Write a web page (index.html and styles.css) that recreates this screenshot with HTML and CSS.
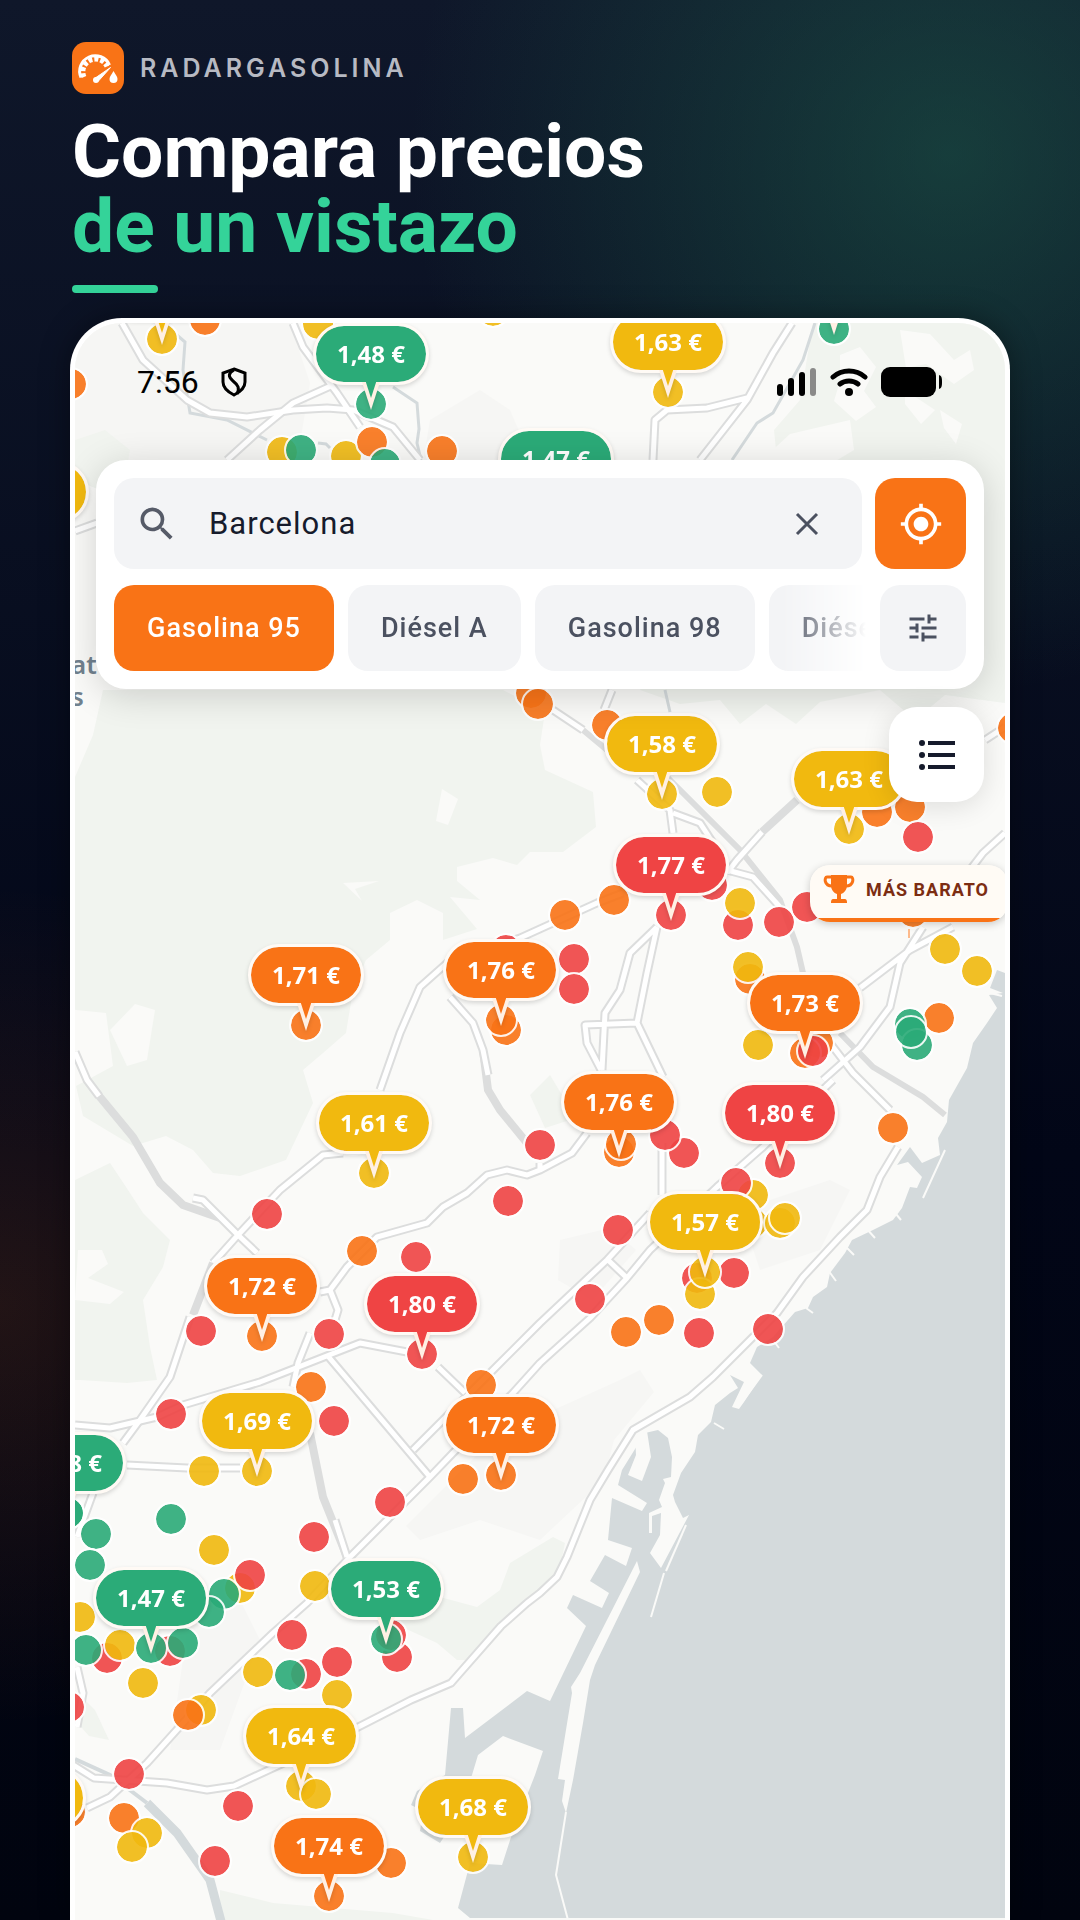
FILE: index.html
```html
<!DOCTYPE html>
<html lang="es">
<head>
    <meta charset="UTF-8">
    <meta name="viewport" content="width=device-width, initial-scale=1.0">
    <title>RadarGasolina</title>
    <link rel="stylesheet" href="styles.css">
</head>
<body>
    <header class="hero">
        <div class="brand">
            <svg class="brand-logo" viewBox="0 0 52 52" aria-hidden="true">
                <rect width="52" height="52" rx="14" fill="#f97316"/>
                <path d="M9 35.500A15.500 15.500 0 0 1 37.500 23" fill="none" stroke="#fff" stroke-width="3"/>
                <path d="M12 35A12.500 12.500 0 0 1 35 24.500" fill="none" stroke="#fff" stroke-width="5" stroke-dasharray="4 2"/>
                <path d="M22.500 36.500L38.500 25.500 26 39.500z" fill="#fff" stroke="#fff" stroke-linejoin="round"/>
                <circle cx="24" cy="38" r="3" fill="#fff"/>
                <path d="M41.500 29c2 3.500 4 5.500 4 8a4 4 0 0 1-8 0c0-2.500 2-4.500 4-8z" fill="#fff"/>
            </svg>
            <span class="brand-name">RADARGASOLINA</span>
        </div>
        <h1>Compara precios <span class="accent">de un vistazo</span></h1>
        <div class="underline"></div>
    </header>

    <main class="screen">
        <div class="map" id="map">
            <svg class="map-base" viewBox="75 323 930 1597" aria-hidden="true">
                <rect x="75" y="323" width="930" height="1597" fill="#fafaf8"/>

                <!-- built-up areas -->
                <g fill="#f6f6f4">
                    <path d="M75 323h215l20 60-10 60-60 40-80 10-85-20z"/>
                    <path d="M420 480l10-60 50-30 30 20 30 70z"/>
                    <path d="M620 1380l20-10 14 22-40 48-10 40-64 60-60-20-60 20-14-14 90-90z"/>
                    <path d="M560 1240l50-12 26 22-44 50-34-20z"/>
                    <path d="M740 1210l90-30 20 10-30 60-60 20z"/>
                    <path d="M190 1610l40-30 30 60-40 110-50 0z"/>
                </g>

                <!-- parks and hills -->
                <g fill="#f1f4ef">
                    <path d="M75 777l18-42 10-45h400l42 22-5 33 5 25 48 22 3 35-33 25h-33l-13 13-24-7-36 9v14l23 19-30-3 27 32-34 11v-27l-26-13-27 13v27l-24 20-13 30-7 43-23 20-20 17 10 33-27 57-46 16-27-3-20-23-27-14-33 10-50-30-7-30 37-20-7-53-30-3-28-10z"/>
                    <path d="M75 1180l35-17 16 24 17 26 27 27-7 27-20 33 7 47 7 33-30 3-47-3h-5z"/>
                    <path d="M813 323h192v380l-60-8-30 25-35-30-60 12-24 22-30-20-26 20-20-24-40 4-40-14 40-60 50-60 20-60 30-20-6-60 26-30z"/>
                    <path d="M440 1597l37 10 23-17 10-27 43-26 12 6-5 25-10 17-23 18-50 57h-20l-20-17-44-20z"/>
                    <path d="M220 1890l53 13 120 10 40 7H220z"/>
                    <path d="M75 440l30-10 25 20-5 30-25 10-25-10z"/>
                    <path d="M530 1095l20-20 12 20 8 25-25 8z"/>
                    <path d="M75 1690l20 20 14 30-20-4-14-16z"/>
                </g>
                <g fill="#fafaf8">
                    <path d="M840 355l20-8 16 20-12 24 12 16-20 14-22-20 6-20z"/>
                    <path d="M850 420l4 30-50 30-40-22 26-24z"/>
                    <path d="M900 330l30 4 24 26 16-10 4 20-20 14-28-20-20 4z"/>
                    <path d="M905 390l30 20-14 14-16-20zM940 410l22 14-6 20-12-16z"/>
                    <path d="M442 789l16 10-10 26-12-4z"/>
                    <path d="M343 883l36-2-24 8 7 12z"/>
                    <path d="M110 1030l25-26 20 6-8 50-20 6z"/>
                    <path d="M78 1250l24 0 6 14-20 14 36 14-14 12-35-4z"/>
                </g>

                <!-- sea and harbour -->
                <path fill="#d4dadc" d="M1005 973l-8-3-7 18 13 5-14 2 8 13-10 15-14 20-6 25-18 32-2 22-9 16 2 17-18 8-12-16-13 18 11-3 14 15-5 11-7-1-8 21-9 12-20 10-21 10-7 13-15 20-3 14-14 10-5 11-13 4-22 25-16 10-7 16 12 12-18 27-5 7-7-2 12-25-14-7 8 13-8 5-15 12-4 17-13 13-3 17-14 21-8 22 2 7 8 16 6-3-28 53-11-15 10-18 1-22-9 3v17h-3v-20l13-6-3-7 6-17-2-4 8-2 1-20-4-19-10-8-13 3-23 37-4 15 29 18-5 8-30-13-4 42 24 8-6 18-21-11-15 26 19 12-7 15-29-13-6 13 19 18-36 75-23-10-62 47-2-30h-12l-6 67-28 16-6 14 12 6-3 20 20 12 10-15 22-53 6-20 25-19 40 15-8 24-22 56-11 34-32-2-12 45 12 10h545z"/>

                <!-- piers and breakwaters -->
                <g fill="#fafaf8">
                    <path d="M637 1561l3 11-45 93-5 15-7 43-10 57-7 33-4-12 3-21-7-1 14-86-1-6 9-14z"/>
                    <path d="M635 1435l12-4 4 26-9 24-14-6 8-20z"/>
                </g>
                <g fill="none" stroke="#fafaf8" stroke-width="2">
                    <path d="M566 1812l-10 63 12 45"/>
                    <path d="M664 1573l-13 44M945 1150l-22 48M762 1375l-22 30"/>
                    <path d="M866 1228l9 10M845 1246l9 9M828 1270l8 11M896 1214l5 6"/>
                    <path d="M714 1423l10 6M806 1308l7 5M773 1340l6 8M986 992l16 4"/>
                    <path d="M686 1525l-20 46"/>
                </g>

                <!-- streams -->
                <g fill="none" stroke="#d4dadc" stroke-width="3">
                    <path d="M163 323l22 19-2 28 7 43 37 7 40 20M393 387l24 16 2 26-2 14 4 17M318 443l8 1 4 4"/>
                    <path d="M815 323l-12 37-30 53-16 10-25 37M665 690l5 22"/>
                    <path stroke-width="4" d="M75 1759l35 16 37 28"/>
                    <path stroke-width="9" d="M147 1803l30 30 33 47 12 45"/>
                </g>

                <!-- tunnels and rail -->
                <g fill="none" stroke="#dcdddd" stroke-width="8">
                    <path d="M87 1080l13 17 33 40 27 46 23 22 37 13"/>
                    <path d="M483 1050l5 40 12 20 27 33"/>
                    <path d="M213 1263l-20 52M797 800l-35 32M310 1433l13 64 24 60"/>
                    <path stroke-width="6" d="M663 773l77 77 40 50 17 47 6 26M840 1033l33 34 50 30 22 18M583 730l24 20"/>
                </g>

                <!-- each road is drawn twice: grey casing, then the white surface -->
                <defs>
                    <g id="roads">
                        <path d="M122 323l21 37 44 40 23 13 37 4 46-7 34-2 26 2 40 17 27 33"/>
                        <path d="M227 460l33-30 33-27 40-18M293 323l10 24 34 46 23 34"/>
                        <path d="M792 323l-19 30-26 47-47 60M747 398l-40 10-40 2-12 10-2 40M75 531l22-8"/>
                        <path d="M553 710l30 20M612 690l-8 20M637 780l33 30 3 23M673 813l27 10 13 20M762 832l-25 28-10 13M727 870l26 7 27 30"/>
                        <path d="M380 1090l20-57 20-46 27-24 73-25 77-35 26-10"/>
                        <path d="M657 927l-27 26-10 37-15 23-3 57M657 927l-10 46-10 50 26 54M637 1023l-52 2 2 18 14 27"/>
                        <path d="M1005 833l-22 20-13 17M923 927l-23 36-10 44-30 40-37 33M953 927l-43 23-50 38M1005 727l-20 13"/>
                        <path d="M830 1043l23 30 37 37M898 1147l-18 30-13 33-27 27-37 40-26 36-24 24-40 40-23 20-57 33-25 40-18 30-23 57-10 20-17 16-13 10-26 23-50 57-40 17-84 43-93 43-27 4-40-7-73-5-40-25"/>
                        <path d="M833 1080l-70 67-46 40-67 63-23 28-37 40-50 45-27 30-60 60-23 24-80 80-43 46-34 30-63 60-63 70-37 34-23 11"/>
                        <path d="M650 1213l-43 47-67 63-47 47-80 80M608 1260l19 18M662 1143v52M450 997l23 26 10 27 5 25"/>
                        <path d="M587 1133l-15 20-32 17-13 5-20-5-20 5-20 18-24 14-16 16-50 14-30 30-17 23 8 20-3 10M330 1290l-10 2M540 1163v8"/>
                        <path d="M343 1153l-20 2-43 35-42 45-25 28M190 1317l-20 60-30 43-17 23M193 1198l10 2 35 35 19 18"/>
                        <path d="M75 1052l12 28 12 16M75 1425l35 3 47-11 26-12 77-23 100-39 47 9"/>
                        <path d="M310 1333l-12 30-5 24M327 1355l103 122M438 1367l27 26M127 1465l60 3h53M335 1520l12 37"/>
                        <path d="M93 1493l-16 44M77 1667l6 26-6 34"/>
                    </g>
                </defs>
                <g fill="none" stroke-linejoin="round">
                    <use href="#roads" stroke="#dcdddd" stroke-width="9"/>
                    <use href="#roads" stroke="#fff" stroke-width="5"/>
                </g>
            </svg>
            <span class="place">at<br>s</span>
        </div>

        <div class="status-bar">
            <span class="clock">7:56</span>
            <svg width="26" height="30" viewBox="0 0 26 30" fill="none" stroke="#000" stroke-width="3" aria-hidden="true">
                <path d="M13 2l11 4v9c0 6-5 10-11 13C7 25 2 21 2 15V6z"/>
                <path d="M13 3c-6 3-6 7-1 11s7 7 4 13"/>
            </svg>
            <div class="status-icons">
                <svg width="40" height="28" viewBox="0 0 40 28" aria-hidden="true">
                    <rect x="0" y="16" width="6" height="12" rx="3"/>
                    <rect x="11" y="10" width="6" height="18" rx="3"/>
                    <rect x="22" y="4" width="6" height="24" rx="3"/>
                    <rect x="33" y="0" width="6" height="28" rx="3" fill="#8a8a89"/>
                </svg>
                <svg width="38" height="28" viewBox="0 0 38 28" fill="none" stroke="#000" stroke-width="5" stroke-linecap="round" aria-hidden="true">
                    <path d="M3 9c9-8 23-8 32 0M10 16c5-4 13-4 18 0"/>
                    <circle cx="19" cy="24" r="4" fill="#000" stroke="none"/>
                </svg>
                <svg width="62" height="30" viewBox="0 0 62 30" aria-hidden="true">
                    <rect width="55" height="30" rx="9"/>
                    <path d="M58 8c3 1 3 4 3 7s0 6-3 7z"/>
                </svg>
            </div>
        </div>

        <section class="search-card">
            <form class="search-row">
                <div class="search-box">
                    <svg width="44" height="44" viewBox="0 0 24 24" fill="#565b68" aria-hidden="true">
                        <path d="M15.500 14h-.79l-.28-.27A6.470 6.470 0 0 0 16 9.500 6.500 6.500 0 1 0 9.500 16c1.610 0 3.090-.59 4.230-1.570l.27.28v.79l5 4.990L20.490 19zm-6 0C7.010 14 5 11.990 5 9.500S7.010 5 9.500 5 14 7.010 14 9.500 11.990 14 9.500 14"/>
                    </svg>
                    <input class="search-input" type="text" value="Barcelona" aria-label="Buscar localidad">
                    <button class="clear-button" type="button" aria-label="Borrar">
                        <svg width="24" height="24" viewBox="0 0 24 24" stroke="#4b5160" stroke-width="3" aria-hidden="true">
                            <path d="M2 2l20 20M22 2L2 22"/>
                        </svg>
                    </button>
                </div>
                <button class="locate-button" type="button" aria-label="Mi ubicación">
                    <svg width="44" height="44" viewBox="0 0 24 24" fill="#fff" aria-hidden="true">
                        <path d="M12 8c-2.210 0-4 1.790-4 4s1.790 4 4 4 4-1.790 4-4-1.790-4-4-4m8.940 3A8.994 8.994 0 0 0 13 3.060V1h-2v2.060A8.994 8.994 0 0 0 3.060 11H1v2h2.060A8.994 8.994 0 0 0 11 20.940V23h2v-2.060A8.994 8.994 0 0 0 20.940 13H23v-2zM12 19c-3.870 0-7-3.130-7-7s3.130-7 7-7 7 3.130 7 7-3.130 7-7 7"/>
                    </svg>
                </button>
            </form>
            <div class="filter-row">
                <div class="fuels">
                    <button class="chip active" type="button">Gasolina 95</button>
                    <button class="chip" type="button">Diésel A</button>
                    <button class="chip" type="button">Gasolina 98</button>
                    <button class="chip" type="button">Diésel A+</button>
                </div>
                <button class="filter-button" type="button" aria-label="Filtros">
                    <svg width="36" height="36" viewBox="0 0 24 24" fill="#4b5160" aria-hidden="true">
                        <path d="M3 17v2h6v-2zM3 5v2h10V5zm10 16v-2h8v-2h-8v-2h-2v6zM7 9v2H3v2h4v2h2V9zm14 4v-2H11v2zm-6-4h2V7h4V5h-4V3h-2z"/>
                    </svg>
                </button>
            </div>
        </section>

        <button class="list-button" type="button" aria-label="Ver lista">
            <svg width="36" height="30" viewBox="0 0 36 30" fill="#161b2c" aria-hidden="true">
                <circle cx="3" cy="3" r="3"/><path d="M9 1h27v4H9z"/>
                <circle cx="3" cy="15" r="3"/><path d="M9 13h27v4H9z"/>
                <circle cx="3" cy="27" r="3"/><path d="M9 25h27v4H9z"/>
            </svg>
        </button>
    </main>

    <script src="map.js"></script>
</body>
</html>
```

FILE: styles.css
```css
* {
    margin: 0;
    padding: 0;
    box-sizing: border-box;
}

body {
    height: 100vh;
    display: flex;
    flex-direction: column;
    overflow: hidden;
    padding: 42px 70px 0;
    font-family: Roboto, sans-serif;
    background:
        radial-gradient(circle at 88% 8%, rgba(34, 110, 84, 0.45), transparent 540px),
        radial-gradient(circle at 0 68%, rgba(249, 115, 22, 0.13), transparent 420px),
        linear-gradient(180deg, #0f172a 0%, #020617 60%, #01040f 100%);
}

button {
    border: none;
    font-family: inherit;
    cursor: pointer;
    display: flex;
    align-items: center;
    justify-content: center;
}

/* Header */

.hero {
    padding: 0 2px;
    margin-bottom: 25px;
}

.brand {
    display: flex;
    align-items: center;
    gap: 16px;
    margin-bottom: 20px;
}

.brand-logo {
    width: 52px;
    height: 52px;
}

.brand-name {
    font-family: Inter, sans-serif;
    font-size: 25px;
    font-weight: 600;
    letter-spacing: 4px;
    color: #b7bac3;
}

h1 {
    color: #fff;
    font-size: 75px;
    line-height: 75px;
    font-weight: 700;
}

.accent {
    display: block;
    color: #34d399;
}

.underline {
    width: 86px;
    height: 8px;
    margin-top: 21px;
    border-radius: 4px;
    background: #34d399;
}

/* Phone screen */

.screen {
    position: relative;
    flex: 1;
    min-height: 0;
    display: flex;
    flex-direction: column;
    overflow: hidden;
    border: 5px solid #fff;
    border-bottom: none;
    border-radius: 52px 52px 0 0;
    background: #fafaf8;
    box-shadow: 0 0 30px rgba(0, 0, 0, 0.4);
}

.status-bar,
.search-card,
.list-button {
    position: relative;
    z-index: 2;
}

.status-bar {
    display: flex;
    align-items: center;
    gap: 22px;
    height: 137px;
    padding: 0 62px 20px;
}

.clock {
    font-size: 32px;
}

.status-icons {
    display: flex;
    align-items: center;
    gap: 13px;
    margin-left: auto;
}

/* Search */

.search-card {
    display: flex;
    flex-direction: column;
    gap: 16px;
    margin: 0 21px;
    padding: 18px;
    border-radius: 30px;
    background: #fff;
    box-shadow: 0 6px 36px rgba(0, 0, 0, 0.16);
}

.search-row {
    display: flex;
    gap: 13px;
}

.search-box {
    flex: 1;
    min-width: 0;
    display: flex;
    align-items: center;
    height: 91px;
    padding: 0 41px 0 21px;
    border-radius: 20px;
    background: #f3f4f6;
}

.search-input {
    flex: 1;
    min-width: 0;
    margin-left: 30px;
    border: none;
    outline: none;
    background: none;
    font-family: inherit;
    font-size: 31px;
    letter-spacing: 1px;
    color: #161b2c;
}

.clear-button {
    width: 28px;
    height: 28px;
    background: none;
}

.locate-button {
    width: 91px;
    height: 91px;
    border-radius: 20px;
    background: #f97316;
}

.filter-row {
    display: flex;
    gap: 14px;
}

.fuels {
    flex: 1;
    min-width: 0;
    display: flex;
    gap: 14px;
    overflow: hidden;
    -webkit-mask-image: linear-gradient(to right, #000 calc(100% - 84px), transparent);
    mask-image: linear-gradient(to right, #000 calc(100% - 84px), transparent);
}

.chip {
    flex-shrink: 0;
    height: 86px;
    padding: 0 33px;
    border-radius: 20px;
    background: #f3f4f6;
    color: #4b5160;
    font-size: 27px;
    font-weight: 500;
    letter-spacing: 1px;
}

.chip.active {
    background: #f97316;
    color: #fff;
}

.filter-button {
    width: 86px;
    height: 86px;
    border-radius: 20px;
    background: #f3f4f6;
}

.list-button {
    align-self: flex-end;
    width: 95px;
    height: 95px;
    margin: 18px 21px 0 0;
    border-radius: 28px;
    background: #fff;
    box-shadow: 0 4px 28px rgba(0, 0, 0, 0.12);
}

/* Map */

.map {
    position: absolute;
    top: 0;
    left: 0;
    width: 100%;
    aspect-ratio: 930 / 1597;
}

.map-base {
    display: block;
    width: 100%;
    height: 100%;
}

/* town name that runs in from beyond the left edge */
.place {
    position: absolute;
    top: 20%;
    left: -4px;
    margin-top: 6px;
    font-family: "Noto Sans", sans-serif;
    font-size: 26px;
    line-height: 32px;
    font-weight: 600;
    color: #71818e;
}

.green { --color: #2bab78; }
.yellow { --color: #f1b90f; }
.orange { --color: #f97316; }
.red { --color: #ef4444; }

.dot {
    position: absolute;
    width: 34px;
    height: 34px;
    border: 2px solid #fff;
    border-radius: 50%;
    background: var(--color);
    background-clip: padding-box;
    opacity: 0.9;
    transform: translate(-50%, -50%);
}

.pin {
    position: absolute;
    width: 116px;
    height: 62px;
    border: 3px solid #fffaf5;
    border-radius: 31px;
    background: var(--color);
    background-clip: padding-box;
    color: #fff;
    font-family: "Noto Sans", sans-serif;
    font-size: 24px;
    font-weight: 700;
    line-height: 56px;
    text-align: center;
    transform: translate(-50%, -50%);
    filter: drop-shadow(0 2px 2px rgba(0, 0, 0, 0.15));
}

/* pointer: pale outline below, coloured tip over it */
.pin::before,
.pin::after {
    content: "";
    position: absolute;
    top: 100%;
    left: 50%;
    transform: translateX(-50%);
    clip-path: polygon(0 0, 100% 0, 50% 100%);
}

.pin::before {
    width: 18px;
    height: 28px;
    background: #fff0e4;
}

.pin::after {
    width: 11px;
    height: 17px;
    margin-top: -1px;
    background: var(--color);
}

.best {
    position: absolute;
    z-index: 1;
    display: flex;
    align-items: center;
    gap: 11px;
    width: 198px;
    height: 57px;
    padding: 0 13px 9px;
    border-radius: 20px;
    background: linear-gradient(#fffbf5 53px, #f97316 53px);
    color: #7c2d12;
    font-size: 18px;
    font-weight: 700;
    letter-spacing: 1px;
    white-space: nowrap;
    box-shadow: 0 2px 8px rgba(0, 0, 0, 0.2);
}

.best::after {
    content: "";
    position: absolute;
    top: 64px;
    left: 98px;
    width: 2px;
    height: 9px;
    background: #fdba8c;
}
```

FILE: map.js
```js
const map = document.getElementById('map');

// Area covered by the base map, in map units
const VIEW = { x: 75, y: 323, width: 930, height: 1597 };
// Distance between a price label and the station it points at
const LABEL_OFFSET = 50;

const COLORS = { g: 'green', y: 'yellow', o: 'orange', r: 'red' };

// Stations without a label, in drawing order
const stations = [
    ['o', 205, 320], ['o', 71, 384], ['y', 282, 452], ['g', 301, 450], ['y', 346, 456],
    ['o', 372, 442], ['g', 385, 464], ['o', 442, 451], ['y', 318, 324], ['y', 493, 311],
    ['o', 531, 693], ['o', 538, 704], ['o', 1013, 728], ['o', 607, 725], ['y', 717, 792],
    ['o', 877, 812], ['o', 910, 807], ['r', 918, 837], ['r', 712, 885], ['o', 614, 900],
    ['o', 565, 915], ['r', 574, 959], ['r', 574, 989], ['r', 738, 925], ['y', 740, 903],
    ['r', 779, 922], ['r', 807, 907], ['o', 913, 912], ['y', 945, 949], ['y', 977, 971],
    ['o', 750, 979], ['y', 748, 967], ['y', 758, 1045], ['o', 818, 1043],
    ['o', 939, 1018], ['g', 910, 1024], ['g', 917, 1045], ['g', 911, 1032],
    ['r', 506, 950], ['o', 506, 1030], ['r', 353, 1139], ['r', 267, 1214], ['o', 362, 1251],
    ['r', 416, 1257], ['r', 508, 1201], ['r', 540, 1145], ['r', 201, 1331], ['r', 329, 1334],
    ['o', 311, 1387], ['r', 171, 1414], ['r', 334, 1421], ['o', 481, 1385], ['o', 463, 1479],
    ['y', 204, 1471], ['r', 390, 1502], ['r', 684, 1153], ['r', 665, 1135],
    ['y', 753, 1195], ['r', 736, 1183], ['y', 752, 1223], ['y', 780, 1223], ['y', 785, 1218],
    ['r', 618, 1230], ['r', 697, 1278], ['y', 700, 1294], ['r', 734, 1273], ['r', 590, 1299],
    ['o', 626, 1332], ['o', 659, 1320], ['r', 699, 1333], ['r', 768, 1329], ['o', 893, 1128],
    ['g', 68, 1513], ['g', 171, 1519], ['g', 96, 1534], ['g', 90, 1565], ['y', 214, 1550],
    ['y', 240, 1588], ['r', 250, 1575], ['g', 224, 1594], ['g', 209, 1612], ['r', 314, 1537],
    ['y', 315, 1586], ['y', 80, 1617], ['r', 107, 1658], ['g', 86, 1650], ['y', 120, 1645],
    ['r', 170, 1651], ['g', 183, 1643], ['y', 143, 1683], ['r', 292, 1635], ['y', 258, 1672],
    ['r', 306, 1674], ['g', 290, 1675], ['r', 337, 1662], ['y', 337, 1695], ['r', 397, 1657],
    ['r', 391, 1635], ['r', 69, 1707], ['y', 201, 1710], ['o', 188, 1715], ['r', 129, 1774],
    ['r', 238, 1806], ['o', 124, 1818], ['y', 147, 1833], ['y', 132, 1847], ['r', 215, 1861],
    ['o', 391, 1863], ['o', 70, 1812],
];

// Stations with a price label; x and y are the centre of the label
const prices = [
    ['y', 162, 289, ''], ['g', 834, 279, ''], ['y', 31, 492, ''], ['y', 28, 1798, ''],
    ['g', 371, 354, '1,48 €'], ['y', 668, 342, '1,63 €'], ['g', 556, 459, '1,47 €'],
    ['y', 662, 744, '1,58 €'], ['y', 849, 779, '1,63 €'], ['r', 671, 865, '1,77 €'],
    ['o', 306, 975, '1,71 €'], ['o', 501, 970, '1,76 €'], ['o', 805, 1003, '1,73 €'],
    ['y', 374, 1123, '1,61 €'], ['o', 619, 1102, '1,76 €'], ['r', 780, 1113, '1,80 €'],
    ['y', 705, 1222, '1,57 €'], ['o', 262, 1286, '1,72 €'], ['r', 422, 1304, '1,80 €'],
    ['y', 257, 1421, '1,69 €'], ['o', 501, 1425, '1,72 €'], ['g', 68, 1463, '1,48 €'],
    ['g', 151, 1598, '1,47 €'], ['g', 386, 1589, '1,53 €'], ['y', 301, 1736, '1,64 €'],
    ['y', 473, 1807, '1,68 €'], ['o', 329, 1846, '1,74 €'],
];

// Stations that lie over a labelled one
const stationsOnTop = [['o', 621, 1144], ['r', 813, 1051], ['y', 316, 1794]];

function addMarker(className, x, y) {
    const marker = document.createElement('div');
    marker.className = className;
    marker.style.left = `${(x - VIEW.x) / VIEW.width * 100}%`;
    marker.style.top = `${(y - VIEW.y) / VIEW.height * 100}%`;
    map.appendChild(marker);
    return marker;
}

function addStation([color, x, y]) {
    addMarker(`dot ${COLORS[color]}`, x, y);
}

stations.forEach(addStation);
prices.forEach(([color, x, y]) => addStation([color, x, y + LABEL_OFFSET]));
stationsOnTop.forEach(addStation);
prices.forEach(([color, x, y, price]) => {
    addMarker(`pin ${COLORS[color]}`, x, y).textContent = price;
});

const best = addMarker('best', 810, 865);
best.innerHTML = `
    <svg width="32" height="28" viewBox="0 0 32 28" aria-hidden="true">
        <path d="M8 0h16v10c0 5-3 8-6 9v5h4c1 0 2 1 2 3v1H8v-1c0-2 1-3 2-3h4v-5c-3-1-6-4-6-9z" fill="#f97316"/>
        <path d="M8 2H4c-3 0-3 9 5 9M24 2h4c3 0 3 9-5 9" fill="none" stroke="#f97316" stroke-width="3"/>
    </svg>
    <span>MÁS BARATO</span>`;
```
